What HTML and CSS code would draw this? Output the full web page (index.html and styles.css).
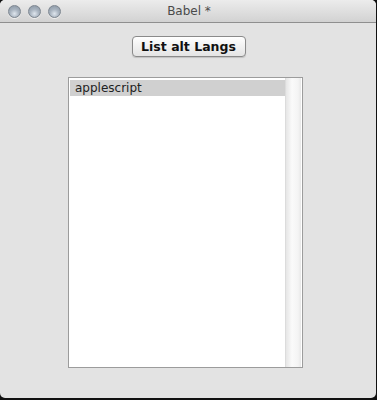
FILE: index.html
```html
<!DOCTYPE html>
<html lang="en">
<head>
    <meta charset="UTF-8">
    <title>Babel *</title>
    <link rel="stylesheet" href="styles.css">
</head>
<body>
    <div class="window">
        <div class="titlebar">
            <div class="lights">
                <span class="light"></span>
                <span class="light"></span>
                <span class="light"></span>
            </div>
            <div class="title">Babel *</div>
        </div>
        <div class="content">
            <button class="push">List alt Langs</button>
            <div class="listbox">
                <div class="items">
                    <div class="item selected">applescript</div>
                </div>
                <div class="scrolltrack"></div>
            </div>
        </div>
    </div>
</body>
</html>
```

FILE: styles.css
```css
html, body {
    margin: 0;
    background: #111;
    width: 377px;
    height: 400px;
    overflow: hidden;
}
.window {
    width: 376px;
    height: 398px;
    background: #e3e3e3;
    border-radius: 5px;
    overflow: hidden;
    display: flex;
    flex-direction: column;
    font-family: "Lucida Grande", "DejaVu Sans", sans-serif;
}
.titlebar {
    height: 22px;
    flex: none;
    position: relative;
    background: linear-gradient(to bottom, #ececec, #d2d2d2);
    border-bottom: 1px solid #8f8f8f;
    display: flex;
    align-items: center;
}
.lights {
    display: flex;
    gap: 7px;
    padding-left: 8px;
}
.light {
    width: 13px;
    height: 13px;
    border-radius: 50%;
    box-sizing: border-box;
    border: 1px solid #7d8690;
    background: radial-gradient(circle at 50% 70%, #dfe6ee 0%, #a9b4c0 45%, #8693a1 100%);
    box-shadow: 0 1px 0 rgba(255, 255, 255, 0.6);
}
.title {
    position: absolute;
    left: 0;
    right: 0;
    top: 0;
    line-height: 22px;
    text-align: center;
    font-size: 12px;
    color: #4a4a4a;
    padding-left: 2px;
}
.content {
    flex: 1;
    display: flex;
    flex-direction: column;
    align-items: center;
}
.push {
    margin-top: 13px;
    margin-left: 1px;
    height: 21px;
    width: 114px;
    padding: 0;
    font-family: "DejaVu Sans", sans-serif;
    font-weight: bold;
    font-size: 12.5px;
    color: #111;
    background: linear-gradient(to bottom, #ffffff, #f1f1f1 50%, #e4e4e4);
    border: 1px solid #8a8a8a;
    border-radius: 4px;
    box-shadow: 0 1px 1px rgba(0, 0, 0, 0.15);
}
.listbox {
    margin-top: 20px;
    margin-right: 5px;
    width: 235px;
    height: 291px;
    box-sizing: border-box;
    border: 1px solid #9c9c9c;
    background: #fff;
    display: flex;
    padding: 2px 1px 1px 1px;
}
.items {
    flex: 1;
}
.item {
    height: 16px;
    line-height: 16px;
    padding-left: 5px;
    font-size: 12px;
    color: #222;
}
.item.selected {
    background: #d0d0d0;
}
.scrolltrack {
    width: 15px;
    margin-top: -2px;
    margin-bottom: -1px;
    background: linear-gradient(to right, #e6e6e6, #fafafa 40%, #f4f4f4 80%, #e8e8e8);
    border-left: 1px solid #dcdcdc;
}
```
